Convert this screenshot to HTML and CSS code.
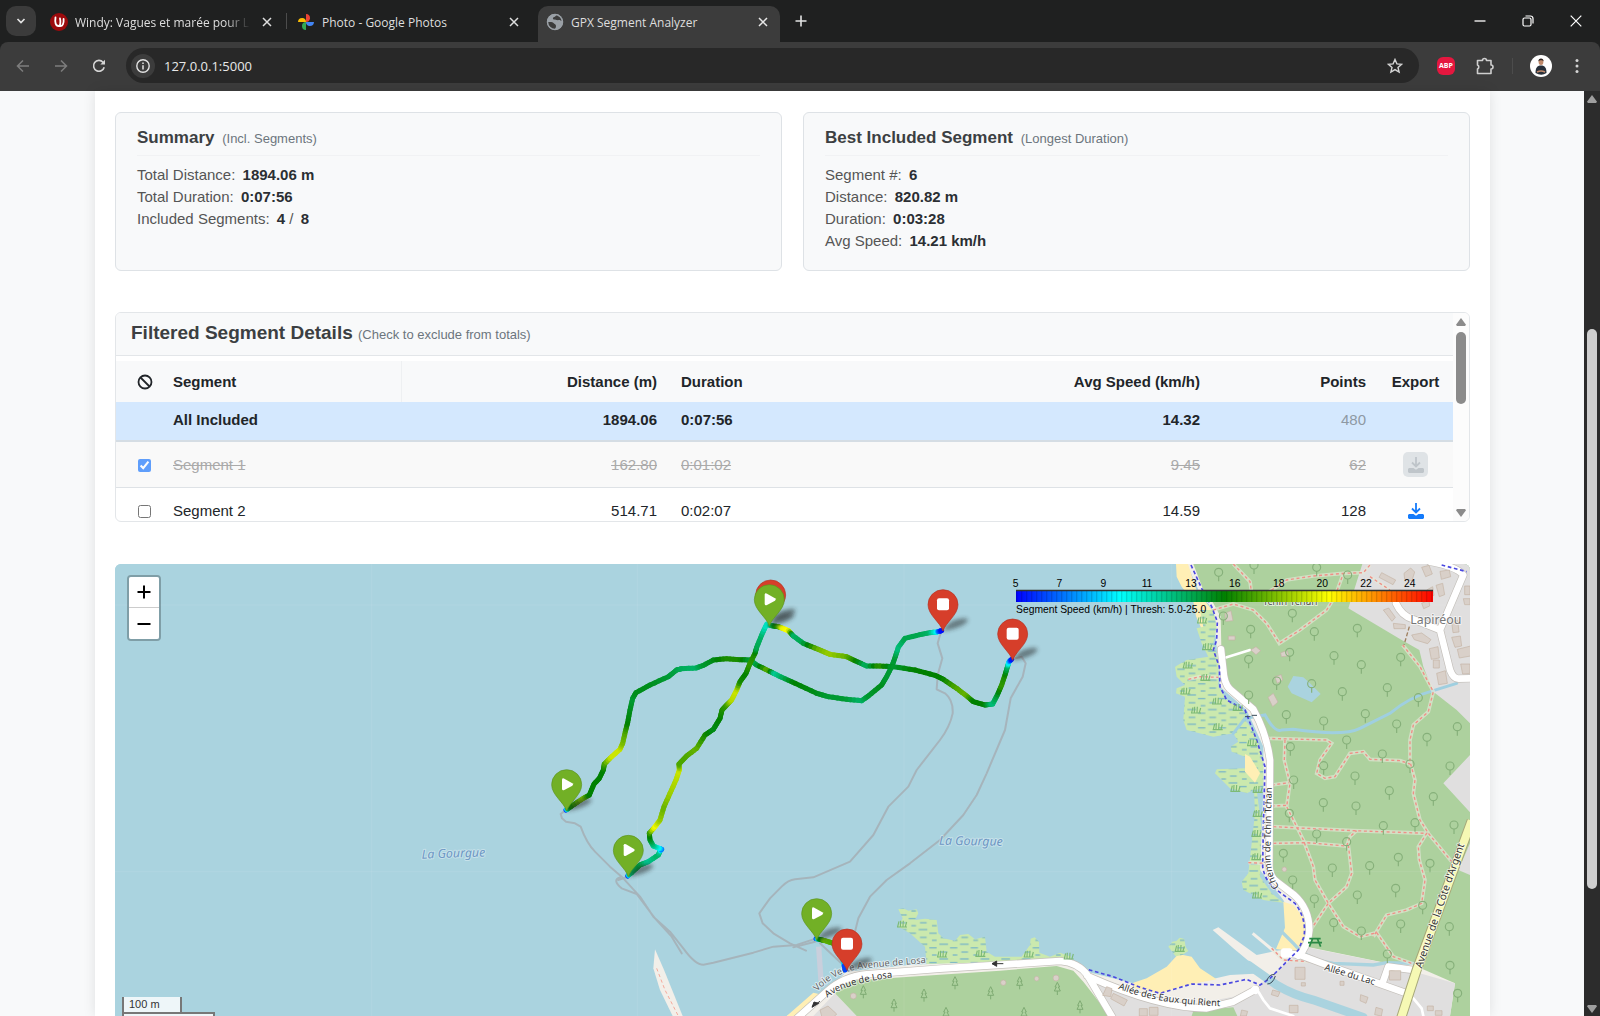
FILE: index.html
```html
<!DOCTYPE html>
<html lang="en">
<head>
<meta charset="utf-8">
<title>GPX Segment Analyzer</title>
<link rel="stylesheet" href="styles.css">
</head>
<body>
<header class="browser">
  <div class="tabstrip">
    <button class="tab-search" aria-label="Search tabs"><svg width="10" height="10" viewBox="0 0 10 10"><path d="M1.5 3 5 6.5 8.500 3" fill="none" stroke="#e3e3e3" stroke-width="1.700"/></svg></button>
    <div class="tab">
      <svg class="fav" viewBox="0 0 18 18"><circle cx="9" cy="9" r="9" fill="#9c0a0c"/><path d="M5.500 4.500c-.8 5 .2 8.500 3 8.500 2 0 2.300-4 1.500-7.500M10 13c2.500.3 4-2.500 3.600-7" fill="none" stroke="#fff" stroke-width="1.800" stroke-linecap="round"/></svg>
      <span class="tab-title fade">Windy: Vagues et marée pour Lè</span>
      <button class="close" aria-label="Close tab"><svg width="10" height="10" viewBox="0 0 10 10"><path d="M1 1 9 9M9 1 1 9" stroke="#dedede" stroke-width="1.500"/></svg></button>
    </div>
    <span class="sep"></span>
    <div class="tab">
      <svg class="fav" viewBox="0 0 18 18"><path d="M9 9V1a4.200 4.200 0 0 1 4 4.300A4 4 0 0 1 9 9z" fill="#ea4335"/><path d="M9 9h8a4.200 4.200 0 0 1-4.300 4A4 4 0 0 1 9 9z" fill="#4285f4"/><path d="M9 9v8a4.200 4.200 0 0 1-4-4.300A4 4 0 0 1 9 9z" fill="#34a853"/><path d="M9 9H1a4.200 4.200 0 0 1 4.300-4A4 4 0 0 1 9 9z" fill="#fbbc04"/></svg>
      <span class="tab-title">Photo - Google Photos</span>
      <button class="close" aria-label="Close tab"><svg width="10" height="10" viewBox="0 0 10 10"><path d="M1 1 9 9M9 1 1 9" stroke="#dedede" stroke-width="1.500"/></svg></button>
    </div>
    <div class="tab active">
      <svg class="fav" viewBox="0 0 18 18"><circle cx="9" cy="9" r="8" fill="#9aa0a6"/><path d="M10 1.500c.5 2.500-2.500 2-3 3.500s1.500 1.500 3.500 2 3-.5 4 .5 2.500 0 2.300-1A8 8 0 0 0 10 1.500zM1.500 9c2 0 5-.5 6 1s2.500 1 2.500 3-1 2-1 3.500A8 8 0 0 1 1.500 9z" fill="#3c3c3c"/><circle cx="9" cy="9" r="7.500" fill="none" stroke="#9aa0a6" stroke-width="1.500"/></svg>
      <span class="tab-title">GPX Segment Analyzer</span>
      <button class="close" aria-label="Close tab"><svg width="10" height="10" viewBox="0 0 10 10"><path d="M1 1 9 9M9 1 1 9" stroke="#e8e8e8" stroke-width="1.500"/></svg></button>
    </div>
    <button class="newtab" aria-label="New tab"><svg width="12" height="12" viewBox="0 0 12 12"><path d="M6 .5v11M.5 6h11" stroke="#e3e3e3" stroke-width="1.600"/></svg></button>
    <div class="window-buttons">
      <button aria-label="Minimize"><svg width="12" height="12" viewBox="0 0 12 12"><path d="M.5 6h11" stroke="#fff" stroke-width="1.300"/></svg></button>
      <button aria-label="Restore"><svg width="12" height="12" viewBox="0 0 12 12"><rect x="1" y="3" width="8" height="8" rx="1.500" fill="none" stroke="#fff" stroke-width="1.200"/><path d="M3.500 1h5A2.500 2.500 0 0 1 11 3.500v5" fill="none" stroke="#fff" stroke-width="1.200"/></svg></button>
      <button aria-label="Close"><svg width="12" height="12" viewBox="0 0 12 12"><path d="M.7.7l10.600 10.600M11.300.7.7 11.300" stroke="#fff" stroke-width="1.200"/></svg></button>
    </div>
  </div>
  <div class="toolbar">
    <button class="nav" aria-label="Back"><svg width="14" height="14" viewBox="0 0 14 14"><path d="M13 7H1.500M7 1.500 1.500 7 7 12.500" fill="none" stroke="#7d7d7d" stroke-width="1.500"/></svg></button>
    <button class="nav" aria-label="Forward"><svg width="14" height="14" viewBox="0 0 14 14"><path d="M1 7h11.500M7 1.500 12.500 7 7 12.500" fill="none" stroke="#7d7d7d" stroke-width="1.500"/></svg></button>
    <button class="nav" aria-label="Reload"><svg width="14" height="14" viewBox="0 0 14 14"><path d="M12.200 8.200A5.400 5.400 0 1 1 11 3.200l1.500 1.600" fill="none" stroke="#d5d5d5" stroke-width="1.600"/><path d="M13 .8v4.700H8.300z" fill="#d5d5d5"/></svg></button>
    <div class="omnibox">
      <button class="site-info" aria-label="Site information"><svg width="14" height="14" viewBox="0 0 14 14"><circle cx="7" cy="7" r="6.200" fill="none" stroke="#e3e3e3" stroke-width="1.400"/><path d="M7 6.200v4.200M7 3.500v1.500" stroke="#e3e3e3" stroke-width="1.500"/></svg></button>
      <input class="url" type="text" value="127.0.0.1:5000" aria-label="Address">
      <button class="star" aria-label="Bookmark"><svg width="16" height="16" viewBox="0 0 16 16"><path d="M8 1.500 9.900 5.900l4.700.4-3.600 3.100 1.100 4.700L8 11.600l-4.100 2.500L5 9.400 1.400 6.300l4.700-.4z" fill="none" stroke="#d5d5d5" stroke-width="1.400"/></svg></button>
    </div>
    <div class="extensions">
      <button class="ext abp"><span>ABP</span></button>
      <button class="ext puzzle" aria-label="Extensions"><svg width="18" height="18" viewBox="0 0 18 18"><path d="M1.500 3.500h5a2 2 0 0 1 4 0h4.500v4.500a2 2 0 0 1 0 4v4.500h-13.500v-4.500a2.200 2.200 0 0 0 0-4z" fill="none" stroke="#cfcfcf" stroke-width="1.600" stroke-linejoin="round"/></svg></button>
      <span class="sep"></span>
      <button class="ext avatar" aria-label="Profile"><svg width="22" height="22" viewBox="0 0 22 22"><circle cx="11" cy="11" r="11" fill="#fff"/><path d="M5.500 18c0-5 1.500-7.500 5.500-7.500s5.500 2.500 5.500 7.500q-5 3.500-11 0z" fill="#27303a"/><ellipse cx="11" cy="7" rx="2.400" ry="3" fill="#c08a6c"/><path d="M8.400 6.500c-.4-4 5.600-4 5.200 0-.8-1.800-4.200-1.800-5.200 0z" fill="#2a201c"/><path d="M7 17q4-2 8 0" stroke="#c08a6c" stroke-width="1.600" fill="none"/></svg></button>
      <button class="ext" aria-label="Menu"><svg width="4" height="16" viewBox="0 0 4 16" fill="#d5d5d5"><circle cx="2" cy="2.500" r="1.500"/><circle cx="2" cy="8" r="1.500"/><circle cx="2" cy="13.500" r="1.500"/></svg></button>
    </div>
  </div>
</header>
<div class="viewport">
  <main class="container">
    <div class="cards">
      <section class="card">
        <h2>Summary <small>(Incl. Segments)</small></h2>
        <p>Total Distance: <b>1894.06 m</b></p>
        <p>Total Duration: <b>0:07:56</b></p>
        <p>Included Segments: <b>4</b> / <b>8</b></p>
      </section>
      <section class="card">
        <h2>Best Included Segment <small>(Longest Duration)</small></h2>
        <p>Segment #: <b>6</b></p>
        <p>Distance: <b>820.82 m</b></p>
        <p>Duration: <b>0:03:28</b></p>
        <p>Avg Speed: <b>14.21 km/h</b></p>
      </section>
    </div>
    <section class="details">
      <div class="scroller">
        <h2 class="details-title">Filtered Segment Details <small>(Check to exclude from totals)</small></h2>
        <table>
          <colgroup><col class="c-check"><col class="c-seg"><col class="c-dist"><col class="c-dur"><col class="c-avg"><col class="c-pts"><col class="c-exp"></colgroup>
          <thead>
            <tr><th class="mid"><svg class="ban" width="16" height="16" viewBox="0 0 16 16" role="img" aria-label="Exclude"><circle cx="8" cy="8" r="6.500" fill="none" stroke="#212529" stroke-width="1.800"/><path d="M3.500 3.500l9 9" stroke="#212529" stroke-width="1.800"/></svg></th><th class="rule">Segment</th><th class="num">Distance (m)</th><th>Duration</th><th class="num">Avg Speed (km/h)</th><th class="num">Points</th><th class="mid">Export</th></tr>
          </thead>
          <tbody>
            <tr class="total"><td></td><td>All Included</td><td class="num">1894.06</td><td>0:07:56</td><td class="num">14.32</td><td class="num muted">480</td><td></td></tr>
            <tr class="excluded"><td class="mid"><input type="checkbox" checked aria-label="Exclude segment 1"></td><td>Segment 1</td><td class="num">162.80</td><td>0:01:02</td><td class="num">9.45</td><td class="num">62</td><td class="mid"><button class="export off" disabled aria-label="Export segment 1"><svg width="16" height="16" viewBox="0 0 16 16"><path d="M8 0v9M4 5.500 8 9.500l4-4" fill="none" stroke="currentColor" stroke-width="1.800"/><path d="M1 11h4.500l2.500 1.800L10.500 11H15l1 1v3l-1 1H1l-1-1v-3z" fill="currentColor"/></svg></button></td></tr>
            <tr><td class="mid"><input type="checkbox" aria-label="Exclude segment 2"></td><td>Segment 2</td><td class="num">514.71</td><td>0:02:07</td><td class="num">14.59</td><td class="num">128</td><td class="mid"><button class="export" aria-label="Export segment 2"><svg width="16" height="16" viewBox="0 0 16 16"><path d="M8 0v9M4 5.500 8 9.500l4-4" fill="none" stroke="currentColor" stroke-width="1.800"/><path d="M1 11h4.500l2.500 1.800L10.500 11H15l1 1v3l-1 1H1l-1-1v-3z" fill="currentColor"/></svg></button></td></tr>
          </tbody>
        </table>
      </div>
      <div class="bar light"><i class="up"></i><i class="thumb"></i><i class="down"></i></div>
    </section>
    <section class="map">
      <svg class="tiles" viewBox="0 0 4065 1380" preserveAspectRatio="xMinYMin slice" role="img" aria-label="Map of the recorded track">
        <defs>
          <pattern id="marsh" width="62" height="44" patternUnits="userSpaceOnUse"><rect width="62" height="44" fill="#cbe9ae"/><path d="M4 9h26M36 20h22M8 32h20M44 41h14" stroke="#5fa5cf" stroke-width="3"/></pattern>
          <linearGradient id="speed"><stop offset="0" stop-color="#00f"/><stop offset=".25" stop-color="#0ff"/><stop offset=".5" stop-color="green"/><stop offset=".75" stop-color="#ff0"/><stop offset="1" stop-color="red"/></linearGradient>
          <pattern id="ticks" width="15" height="36" patternUnits="userSpaceOnUse"><path d="M2 0v36" stroke="#000" stroke-opacity=".14" stroke-width="4"/></pattern>
          <filter id="soft" x="-50%" y="-50%" width="200%" height="200%"><feGaussianBlur stdDeviation="7"/></filter>
          <g id="leaf-tree" fill="none" stroke="#86b07a" stroke-width="3.500"><circle r="12"/><path d="M0 12v15"/></g>
          <g id="pine" fill="none" stroke="#7fab73" stroke-width="3"><path d="M0-18-7-4h4L-9 8h18L3-4h4zM0 8v12"/></g>
          <path id="reeds" d="M-12 8-8-8M-4 8-3-10M4 8 5-10M11 8l4-14M-14 9h30" fill="none" stroke="#7dba75" stroke-width="3.500"/>
          <path id="pin-shape" d="M0 0C-8-26-45-48-45-79a45 45 0 0 1 90 0C45-48 8-26 0 0z"/>
          <g id="pin-shadow"><path d="M0 0C8-20 30-36 66-38c18 2 4 16-14 24C35-6 18-2 0 0z" fill="#222" opacity=".5" filter="url(#soft)"/></g>
          <g id="start"><use href="#pin-shadow"/><use href="#pin-shape" fill="#72b026" stroke="#5c9420" stroke-width="2"/><path d="M-14-94v28q1 6 7 3l24-13q5-4 0-7l-24-14q-6-3-7 3z" fill="#fff"/></g>
          <g id="stop"><use href="#pin-shadow"/><use href="#pin-shape" fill="#d63e2a" stroke="#b53424" stroke-width="2"/><rect x="-18" y="-98" width="36" height="36" rx="6" fill="#fff"/></g>
        </defs>
        <rect width="4065" height="1500" fill="#aad3df"/>
        <g transform="translate(2655 -12)">
          <path d="M560 12 600 100 640 150 650 262 660 380 740 450 790 560 790 690 780 930 850 1020 920 1160 830 1172 770 1185 655 1102 638 1110 700 1165 790 1240 690 1245 560 1275 400 1270 260 1235 180 1195 0 1200-280 1216-460 1235-560 1330-640 1368H1410V12z" fill="#f2efe9"/>
          <path d="M528 12h36l26 80 48 60v48l-32 10-18-42-8-43-35-45-15-30zM850 1025l30 10 32 40 3 65-25 35-62-8 27-64zM400 1268l40-13 60-35 35-38 40 8 25 35 50 33-90 17-80 25-80-16zM-640 1368l80-70 20 5-60 65z" fill="#ffefb5"/>
          <path d="M580 12 610 90 640 130 662 170 664 260 680 370 700 395 765 450 805 545 816 600 812 900 820 955 880 1010 920 1060 925 1110 920 1160 1140 1205 1240 1215 1365 1270 1350 1368H1410V12z" fill="#add19e"/>
          <path d="M1087 12 1045 145 1205 240 1258 270 1270 320 1300 395 1370 450 1410 490V12zM1410 585l-80 85 80 87zM1410 850l-35 80 35 15zM262 1250l98 40 180 50 160-30 70-30 100-78 50-40 220 44 225 64-15 98H335zM-495 1300l65 68h-130z" fill="#e0dfdf"/>
          <path d="M-495 1300l45-38L0 1232l170-14 50 14 30 33 80 103h-760zM580 1352l120-10 12 26H575z" fill="#add19e"/>
          <path d="M600 150h40l10 50-10 50 15 50v80l25 40 60 40-40 60-60 10-80-20-10-30 5-70-27-10 2-15 25-10-25-25-5-30 35-20 65-10-20-40-15-45 20-5zM700 520l35-40 30 40 25 80v80l-20 10 14 110-4 150 35 50 35 28-60-8-60-30-5-25 20-25 20-180-3-70-22 10-50-15-45-45 5-12 85-3v-35l-40-15-3-15 23-15zM505 1160l12-15 12-2 10-10 14 4 4 24 8 12-18 12-20 4zM-305 1048L-290 1045-275 1052-250 1048-245 1060-255 1080-225 1076-190 1080-185 1120-170 1135-135 1142-120 1125-95 1122-75 1138-45 1130-40 1175-15 1190 65 1190 90 1155 92 1136 104 1132 117 1145 118 1178 150 1190 180 1178 214 1190 205 1200-220 1212-225 1160-270 1120-305 1100-292 1075z" fill="url(#marsh)"/>
          <path d="M735 582l15 8 30 50-15 28-30-33z" fill="#ffefb5"/>
          <g fill="none" stroke="#aad3df" stroke-linecap="round">
            <path d="M745 1215 830 1275Q880 1305 940 1320L1090 1372" stroke-width="26"/>
            <path d="M845 1115 880 1150Q920 1200 1000 1210L1120 1215 1160 1208 1240 1210" stroke-width="10"/>
            <path d="M700 520 735 475 795 465Q825 520 845 510L880 508Q1030 530 1080 505L1170 460Q1230 410 1300 392L1370 370" stroke-width="9" stroke="#9fcfe0"/>
          </g>
          <path d="M880 348l30 4 20 18 32 32-27 25-60-27-12-20z" fill="#aad3df"/>
          <path d="M-1035 1168l25 57 58 143h-30l-38-78-20-65z" fill="#f2efe9"/>
          <path d="M-1030 1225 -1005 1290 -965 1368" fill="none" stroke="#f5a99b" stroke-width="3" stroke-dasharray="10 8"/>
          <path d="M-544 1160-537 1262" stroke="#c9cfdc" stroke-width="16"/>
          <path d="M758 1120 830 1180" stroke="#f2efe9" stroke-width="9"/>
          <g fill="none" stroke="#e6e8d8" stroke-opacity=".65" stroke-width="11" id="paths">
            <path id="trail" d="M565 358 600 350 655 352M640 150 700 132 760 150 800 190 838 250 900 210 980 150 1005 110 1030 40 1090 38 1110 15M700 12 750 65 755 100M800 100 860 60 940 48 1030 40M1110 50 1170 90M1208 255 1260 320 1300 395 1285 455 1240 495 1230 540 1230 605 1245 660 1240 700 1260 780 1285 820 1355 905M800 535 980 540 995 550 960 600 950 640 975 655 1005 650 1050 580 1090 575 1110 598 1200 602 1230 612M855 540 853 600 870 670 860 740 910 840 940 920 945 960 985 1030 1030 1100 1080 1130 1130 1118 1180 1190 1240 1212M815 675 868 668M815 738 860 736M820 800 1060 812 1280 820 1255 860 1258 900 1275 960 1265 1030 1220 1050 1160 1065 1120 1130M820 850 920 848 1040 858 1050 830 1070 812M1045 855 1055 940 1040 980 985 1030 935 1105M745 908 800 910M815 1165 850 1200 930 1205"/>
          </g>
          <use href="#trail" class="trail-dash"/>
          <path d="M1228 200 1212 255" stroke="#a08060" stroke-width="4" stroke-dasharray="12 6"/>
          <g fill="none" stroke-linecap="round" stroke-linejoin="round" stroke="#c4c0bb" stroke-width="24" id="roads">
            <g id="road-lines">
              <path d="M663 268 670 330Q672 370 690 388L760 448Q800 520 810 600L808 920Q810 950 830 965L880 1003Q928 1045 928 1110 925 1160 895 1187"/>
              <path d="M-620 1385-520 1295Q-470 1250-400 1243L-180 1226 180 1203Q235 1208 262 1245L345 1385M262 1248Q480 1345 620 1345L700 1325 768 1288"/>
              <path d="M860 1180 900 1185 980 1215 1130 1268 1220 1300M1150 1262 1165 1220 1240 1230"/>
              <path d="M1188 130Q1205 168 1240 178L1320 210 1390 45Q1370 20 1290 5M1320 210 1350 330Q1360 356 1375 356L1410 355"/>
            </g>
          </g>
          <use href="#road-lines" class="road-fill"/>
          <g fill="none" stroke="#fff" stroke-linecap="round"><path d="M680 292 750 270" stroke-width="8"/><path d="M772 1290 790 1320 810 1345 880 1368M1240 1315 1265 1345 1270 1368" stroke-width="8"/></g>
          <rect x="843" y="1165" width="34" height="28" rx="8" fill="#fff"/><circle cx="765" cy="1290" r="13" fill="#fff"/>
          <path d="M1195 1400 1250 1230 1415 782" fill="none" stroke="#a7a879" stroke-width="30"/>
          <path d="M1195 1400 1250 1230 1415 782" fill="none" stroke="#f6f9b4" stroke-width="24"/>
          <path d="M573 15 605 85 635 140 652 185 650 240 640 270 658 320 660 380 680 420 735 450 770 540 795 620 790 800 788 920Q795 965 830 990L885 1030Q920 1075 912 1130L895 1170 810 1255 780 1275 740 1258 660 1275 575 1272 480 1300 420 1282 340 1250 262 1228M1325 15 1400 35" fill="none" stroke="#4a48e0" stroke-width="5" stroke-dasharray="11 8"/>
          <g fill="none" stroke="#3a4a58" stroke-width="3"><path d="M800 1262q10-22 24-18M802 1272q16 0 24-24M735 470h16M755 466h16"/></g>
          <g fill="#d9d0c9" stroke="#c4b3a5" stroke-width="2">
            <path d="M1145 38l42 22-8 14-42-22zM1212 40l20-16 12 12-8 26-22-4zM1265 22l22-6 10 26-20 8zM1320 34l28-4 4 20-28 8zM1308 76l20-6 6 34-16 6zM1280 90l18-10 4 26-14 6zM1150 150l16-6 20 28-10 12zM1265 130l22-10 2 18-18 8zM1235 225l30-6 28 20-10 12-40-12zM1288 266l26-6 4 34-24 4zM1355 232l26-4 4 30-20 4zM1372 268l40-10v30l-34 6zM1382 312h28v28l-22 2zM1310 340l26-8 6 38-26 4zM1355 186l18-6 4 36-18 2zM1394 78h16v26h-16zM1390 116h20v18h-16zM1300 300h18v24h-18zM1180 190l36 4v12h-34z"/>
            <path d="M675 160l18-8 6 30-22 2zM685 228h20v12h-20zM752 270l16-10 14 12-14 12zM842 278l20-6 4 16-22 2zM824 350l20-6 4 16-16 10zM804 412l16-12 14 26-16 14z"/>
            <path d="M885 1222h30v36h-30zM1168 1232h34v28h-34zM904 1268h12v10h-12zM1020 1264h12v12h-12zM818 1290l22 6-6 14-20-6zM868 1336h26v22h-26zM1082 1304l22 8-6 18-18-8zM1128 1342l20 6-4 20-20-4zM1282 1338h18v14h-18zM1306 1352h20v14h-20zM320 1280l16 6-4 24-24-4zM340 1300l42 20-10 18-40-22zM418 1346h24v22h-24zM448 1342h26v24h-26zM725 1350l18 4-4 14h-18z"/>
            <circle cx="10" cy="1268" r="8"/><circle cx="110" cy="1256" r="7"/><circle cx="168" cy="1254" r="9"/><circle cx="-440" cy="1308" r="9"/><path d="M-540 1350l24-12 26 24-10 10h-34z"/><circle cx="853" cy="928" r="7"/>
          </g>
          <path d="M928 1136h34M924 1148h42M938 1136l-10 24M952 1136l10 24" stroke="#2a8a45" stroke-width="5"/>
          <g id="trees"></g>
          <g stroke="#fff" stroke-opacity=".12" stroke-width="2"><path d="M515 12v1356M-288 12v1356M-1088 12v1356M-1885 12v1356M-2655 135H1410M-2655 935H1410"/></g>
        </g>
        <g transform="translate(1275 -12)" class="route">
          <path d="M75 752 62 762 66 775 78 785 105 790 122 800Q140 850 165 875L210 920 245 950 300 1010 340 1070 390 1115 430 1165Q465 1214 490 1214L520 1208 640 1178 700 1160 770 1155 820 1138M240 952Q215 960 245 985L290 1002 345 1075 395 1130 425 1180M265 950 235 960"/>
          <path d="M1203 215 1193 250 1207 295 1193 345 1190 388 1215 400Q1240 420 1238 460 1230 500 1200 540L1130 630 1105 680 1045 740 1000 825 930 905 820 952 765 958Q745 960 725 980L690 1015 658 1060 668 1090 700 1120 750 1150 798 1172M760 1162 825 1145"/>
          <path d="M1415 298 1445 290 1457 310 1448 350 1412 415 1395 510 1340 640 1310 705 1270 765 1200 840 1110 910 1040 960 990 1010 955 1075 945 1115M840 1150 915 1220"/>
        </g>
        <g class="labels">
          <text class="water" transform="translate(920 884) rotate(-2)">La Gourgue</text>
          <text class="water" transform="translate(2472 842) rotate(1)">La Gourgue</text>
          <text class="place" x="3886" y="181">Lapiréou</text>
          <text class="place small" x="3443" y="123">Tchin Tchan</text>
          <g transform="translate(2655 -12)">
            <path id="l1" d="M838 980Q806 940 812 850L817 600" fill="none"/>
            <path id="l2" d="M354 1286Q500 1345 760 1338" fill="none"/>
            <path id="l3" d="M972 1230 1180 1292" fill="none"/>
            <path id="l4" d="M1265 1226 1427 758" fill="none"/>
            <path id="l5" d="M-518 1313Q-450 1262-270 1247" fill="none"/>
            <path id="l6" d="M-548 1295Q-500 1240-420 1226L-180 1205" fill="none"/>
            <text class="street"><textPath href="#l1">Chemin de Tchin Tchan</textPath></text>
            <text class="street"><textPath href="#l2">Allée des Eaux qui Rient</textPath></text>
            <text class="street"><textPath href="#l3">Allée du Lac</textPath></text>
            <text class="street avenue"><textPath href="#l4">Avenue de la Côte d'Argent</textPath></text>
            <text class="street"><textPath href="#l5">Avenue de Losa</textPath></text>
            <text class="street faint"><textPath href="#l6">Voie Verte Avenue de Losa</textPath></text>
            <path d="M10 1211h-34M-10 1203l-14 8 14 8zM-540 1324l-24 16M-544 1330l-20 12 6-16z" stroke="#333" stroke-width="3" fill="#333"/>
          </g>
        </g>
        <g id="tracks" transform="translate(1275 -12)"></g>
        <g transform="translate(1275 -12)">
          <use href="#stop" x="692" y="184"/><use href="#start" x="688" y="198"/><use href="#stop" x="1209" y="213"/><use href="#stop" x="1418" y="301"/>
          <use href="#start" x="80" y="753"/><use href="#start" x="265" y="950"/><use href="#start" x="830" y="1140"/><use href="#stop" x="921" y="1231"/>
        </g>
        <g transform="translate(2703 78)" class="legend">
          <rect width="1251" height="36" fill="url(#speed)"/><rect width="1251" height="36" fill="url(#ticks)"/><path d="M0 1.500h1251" stroke="#333" stroke-width="4"/>
          <g text-anchor="middle"><text x="-1" y="-10">5</text><text x="130" y="-10">7</text><text x="262" y="-10">9</text><text x="393" y="-10">11</text><text x="525" y="-10">13</text><text x="656" y="-10">16</text><text x="788" y="-10">18</text><text x="919" y="-10">20</text><text x="1050" y="-10">22</text><text x="1181" y="-10">24</text></g>
          <text x="0" y="70">Segment Speed (km/h) | Thresh: 5.0-25.0</text>
        </g>
      </svg>
      <div class="zoom"><button aria-label="Zoom in"><svg width="14" height="14" viewBox="0 0 14 14"><path d="M7 .5v13M.5 7h13" stroke="#000" stroke-width="2"/></svg></button><button aria-label="Zoom out"><svg width="14" height="14" viewBox="0 0 14 14"><path d="M.5 7h13" stroke="#000" stroke-width="2"/></svg></button></div>
      <div class="scale"><div class="metric">100 m</div><div class="imperial"></div></div>
    </section>
  </main>
  <div class="bar dark"><i class="up"></i><i class="thumb"></i><i class="down"></i></div>
</div>
<script src="script.js"></script>
</body>
</html>
```
FILE: styles.css
```css
* { box-sizing: border-box; }
body { margin: 0; height: 100vh; display: flex; flex-direction: column; overflow: hidden; font-family: "Liberation Sans", Arial, sans-serif; font-size: 15px; color: #212529; background: #f8f9fa; }
button { border: 0; padding: 0; background: none; display: flex; align-items: center; justify-content: center; font: inherit; }

/* Browser frame */
.browser { background: #1f2020; font-family: "Open Sans", "Noto Sans", sans-serif; font-size: 12px; color: #dedede; }
.tabstrip { height: 42px; display: flex; align-items: center; padding-left: 6px; }
.tab-search { width: 30px; height: 30px; border-radius: 10px; background: #3b3b3b; margin-right: 4px; }
.tab { width: 246px; height: 36px; display: flex; align-items: center; padding: 2px 10px 0 10px; }
.fav { width: 18px; height: 18px; flex: none; margin-right: 7px; }
.tab-title { flex: 1; white-space: nowrap; overflow: hidden; }
.fade { mask-image: linear-gradient(90deg, #000 86%, transparent); }
.close { width: 18px; height: 18px; margin-left: 8px; }
.sep { width: 1px; height: 16px; background: #4c4c4c; }
.active { width: 242px; height: 36px; background: #3c3c3c; border-radius: 10px 10px 0 0; align-self: flex-end; padding: 0 8px 4px; margin-left: 5px; }
.newtab { width: 30px; height: 30px; margin-left: 6px; }
.window-buttons { margin-left: auto; display: flex; }
.window-buttons button { width: 48px; height: 40px; }
.toolbar { height: 49px; display: flex; align-items: center; background: #3c3c3c; border-radius: 8px 8px 0 0; padding: 0 0 2px 8px; }
.nav { width: 30px; height: 30px; margin-right: 8px; }
.omnibox { flex: 1; height: 35px; margin-left: 4px; display: flex; align-items: center; border-radius: 18px; background: #282828; padding: 0 16px 0 5px; }
.site-info { width: 24px; height: 24px; border-radius: 50%; background: #3c3c3c; flex: none; }
.url { flex: 1; border: 0; background: none; color: #e8e8e8; font: inherit; font-size: 13px; margin-left: 7px; }
.extensions { display: flex; align-items: center; width: 181px; padding: 0 21px 0 18px; justify-content: space-between; }
.abp { width: 18px; height: 18px; background: #e5173f; border-radius: 6px; color: #fff; font-weight: 700; font-size: 7px; }
.puzzle { margin-left: 4px; }
.avatar { margin-right: 6px; }

/* Page */
.viewport { flex: 1; min-height: 0; display: flex; }
.container { flex: 1; margin: 0 94px 0 95px; padding: 21px 20px 0; background: #fff; box-shadow: 0 0 12px rgba(0, 0, 0, .1); display: flex; flex-direction: column; }
.cards { display: grid; grid-template-columns: 1fr 1fr; gap: 21px; }
.card { border: 1px solid #dee2e6; border-radius: 6px; background: #f8f9fa; padding: 15px 21px 18px; color: #555; line-height: 22px; }
.card h2 { margin: 0 0 8px; padding-bottom: 7px; border-bottom: 1px solid #f1f2f4; font-size: 17px; line-height: 20px; color: #3c3f42; }
small { font-size: 13px; font-weight: 400; line-height: 1; color: #6c757d; }
.card small { margin-left: 3px; }
.card p { margin: 0; }
.card b { color: #2b2f33; margin-left: 3px; }
.details { height: 210px; margin: 41px 0 42px; display: flex; border: 1px solid #e3e6e9; border-radius: 6px; overflow: hidden; }
.scroller { flex: 1; overflow: hidden; }
.details-title { height: 43px; margin: 0 0 5px; padding: 0 15px; font-size: 19px; line-height: 40px; color: #3c3f42; background: #f8f9fa; border-bottom: 1px solid #e3e6e9; }
table { width: 100%; table-layout: fixed; border-collapse: separate; border-spacing: 0; }
.c-check { width: 45px; }
.c-seg { width: 241px; }
.c-dist { width: 267px; }
.c-pts { width: 166px; }
.c-exp { width: 75px; }
th, td { height: 46px; padding: 0 12px; text-align: left; border-bottom: 1px solid #dee2e6; }
th { height: 41px; background: #f8f9fa; border: 0; }
.rule { border-right: 1px solid #eef0f2; }
.num { text-align: right; }
.mid { text-align: center; }
th.mid, td.mid { padding: 0; }
td.mid:first-child, th.mid:first-child { padding: 0 0 2px 12px; }
.mid button { margin: 0 auto; }
.ban { vertical-align: middle; }
input[type="checkbox"] { width: 13px; height: 13px; margin: 0; vertical-align: middle; accent-color: #0d6efd; }
.total td { height: 40px; padding-bottom: 3px; background: #d4e8fe; font-weight: 700; border-bottom: 2px solid #d5dde4; }
.total .muted { font-weight: 400; color: #8e99a4; }
.excluded td { background: #f9f9f9; color: #aaa; text-decoration: line-through; }
.excluded input { opacity: .65; }
.export { width: 25px; height: 25px; color: #147bfb; border-radius: 5px; }
.off { background: #dfe3e6; color: #bfc5ca; }

/* Scroll bars */
.bar { width: 16px; display: flex; flex-direction: column; align-items: center; background: #fcfcfc; }
.bar i { display: block; }
.up, .down { width: 10px; height: 8px; background: #8b8b8b; }
.up { clip-path: polygon(50% 0, 100% 85%, 90% 100%, 10% 100%, 0 85%); }
.down { clip-path: polygon(50% 100%, 100% 15%, 90% 0, 10% 0, 0 15%); margin-top: auto; margin-bottom: 4px; }
.thumb { width: 10px; height: 72px; border-radius: 5px; background: #8b8b8b; }
.light .up { margin: 5px 0 6px; }
.dark { background: #2c2c2c; }
.dark .up, .dark .down { background: #9f9f9f; }
.dark .up { margin: 4px 0 0; }
.dark .thumb { height: 560px; margin-top: 226px; background: #cfcfcf; }
.dark .down { margin-bottom: 3px; }

/* Map */
.map { flex: 1; min-height: 0; position: relative; overflow: hidden; border-radius: 6px 6px 0 0; background: #aad3df; }
.tiles { display: block; width: 100%; height: auto; min-height: 100%; }
.trail-dash { fill: none; stroke: #f08f86; stroke-width: 4px; stroke-dasharray: 9 8; }
.road-fill { fill: none; stroke: #fff; stroke-width: 20px; stroke-linecap: round; stroke-linejoin: round; }
.route { fill: none; stroke: #a5adb3; stroke-width: 6px; stroke-linejoin: round; stroke-linecap: round; opacity: .8; }
.labels { font-family: "Noto Sans", sans-serif; }
.labels text { paint-order: stroke; stroke: rgba(255, 255, 255, .6); stroke-width: 6px; stroke-linejoin: round; }
.water { font-size: 37px; font-style: italic; fill: #6c96c4; }
.labels .water { stroke: rgba(255, 255, 255, .35); }
.place { font-size: 37px; fill: #777; }
.place.small { font-size: 30px; fill: #555; }
.street { font-size: 28px; fill: #333; }
.avenue { font-size: 31px; }
.faint { fill: #666; }
.legend { font-family: "Liberation Sans", Arial, sans-serif; font-size: 31px; fill: #000; }
.zoom { position: absolute; left: 12px; top: 11px; width: 34px; border: 2px solid rgba(0, 0, 0, .25); border-radius: 4px; background-clip: padding-box; }
.zoom button { width: 30px; height: 31px; background: #fff; border-radius: 2px 2px 0 0; }
.zoom button:first-child { border-bottom: 1px solid #ccc; }
.zoom button:last-child { border-radius: 0 0 2px 2px; }
.scale { position: absolute; left: 7px; bottom: -12px; font-size: 11px; line-height: 13px; color: #333; }
.scale div { border: 2px solid #777; background: rgba(255, 255, 255, .8); }
.scale .metric { width: 60px; height: 17px; padding: 1px 5px; border-top: 0; }
.scale .imperial { width: 93px; height: 16px; border-bottom: 0; margin-top: -2px; }
```
FILE: script.js
```js
const NS = 'http://www.w3.org/2000/svg';

// Speed scale, 5 to 25 km/h: blue, cyan, green, yellow, red.
const STOPS = [[0, 0, 255], [0, 255, 255], [0, 128, 0], [255, 255, 0], [255, 0, 0]];
function speedColor(speed) {
  const t = Math.max(0, Math.min(3.999, (speed - 5) / 5));
  const i = Math.floor(t);
  return 'rgb(' + STOPS[i].map((c, k) => Math.round(c + (STOPS[i + 1][k] - c) * (t - i))).join(',') + ')';
}

// Each point is x, y, speed.
const TRACKS = [
  [[78,750,5],[84,746,13],[95,738,15],[130,715,17.5],[148,705,15],[162,672,15],[178,655,15],[190,630,15],[193,612,16],[215,590,19],[240,568,19],[248,550,17.5],[256,515,16.5],[263,488,15],[270,450,14.5],[278,415,14],[288,398,14.5],[330,375,14.5],[385,350,14],[410,330,13.7],[425,326,13.3],[468,324,13],[490,316,14],[520,300,14.5],[560,296,15.5],[600,299,15.5],[630,300,14],[650,315,13.5],[685,332,17],[705,342,12],[725,352,13],[765,370,15],[830,400,14.5],[865,410,14],[920,418,14],[965,422,13],[985,408,14],[1025,375,14.5],[1040,350,14],[1056,318,14],[1066,290,14],[1075,262,12.5],[1095,235,13.5],[1140,224,13.5],[1170,218,13],[1190,216,10.5],[1197,214,7],[1205,212,5]],
  [[263,948,5],[268,943,12],[275,938,13],[300,915,14],[325,905,12],[355,885,13],[360,873,12],[365,868,7],[355,864,10],[340,858,12],[330,840,14],[328,820,15.5],[345,800,20],[360,780,18],[372,740,17],[390,700,18],[408,660,18.5],[418,630,19],[417,612,16.5],[440,588,16.5],[470,565,17],[495,525,15.5],[520,508,14.5],[540,475,15],[546,450,15.5],[560,435,16],[575,420,18.5],[590,390,19],[600,365,15.5],[618,340,15],[630,310,16],[645,280,15.5],[650,262,13.5],[665,225,13],[680,192,11]],
  [[685,195,11],[700,198,14],[715,200,16],[728,205,19.5],[745,212,20],[760,228,13],[790,250,13.5],[835,268,17],[870,283,18],[920,290,17],[945,302,15.5],[980,318,13],[1020,318,16],[1060,320,14],[1125,330,15],[1185,346,15],[1210,358,15],[1250,385,16.5],[1280,408,17],[1300,425,15],[1335,435,15],[1358,432,12.5],[1372,405,14],[1385,375,16],[1395,345,15.5],[1403,318,13],[1407,305,9],[1415,298,5]],
  [[828,1136,5],[838,1138,14],[855,1142,17],[880,1150,16.5],[905,1180,16],[915,1230,5]]
];

function add(parent, name, attrs) {
  const el = document.createElementNS(NS, name);
  for (const key in attrs) el.setAttribute(key, attrs[key]);
  parent.appendChild(el);
}

const tracks = document.getElementById('tracks');
const STEPS = 4;
for (const track of TRACKS) {
  for (let i = 1; i < track.length; i++) {
    const [x0, y0, s0] = track[i - 1];
    const [x1, y1, s1] = track[i];
    for (let k = 0; k < STEPS; k++) {
      const a = k / STEPS, b = (k + 1) / STEPS;
      add(tracks, 'line', {
        x1: x0 + (x1 - x0) * a, y1: y0 + (y1 - y0) * a,
        x2: x0 + (x1 - x0) * b, y2: y0 + (y1 - y0) * b,
        stroke: speedColor(s0 + (s1 - s0) * (a + b) / 2),
        'stroke-width': 15, 'stroke-linecap': 'round'
      });
    }
  }
}

const SYMBOLS = {
  'leaf-tree': [[656,37],[762,15],[950,22],[1043,45],[877,160],[670,168],[752,208],[943,215],[1072,205],[746,298],[869,277],[1002,287],[1084,314],[1202,292],[830,363],[935,371],[1027,395],[1162,383],[746,405],[1255,413],[859,464],[971,483],[1096,461],[1190,492],[1040,540],[1372,500],[1281,532],[871,560],[1147,582],[971,617],[1350,618],[1065,648],[881,660],[1230,612],[970,728],[1068,738],[1168,692],[1300,710],[1150,797],[1245,788],[1362,795],[950,822],[850,880],[997,924],[1109,917],[1195,892],[1290,910],[878,960],[943,1017],[1072,1005],[1187,985],[1268,1036],[1348,1100],[1202,1092],[1001,1088],[1084,1113],[1162,1182],[1350,1216],[1373,1300],[868,760],[1040,845]],
  'pine': [[-410,1295],[-318,1335],[-228,1305],[-135,1268],[-28,1298],[59,1268],[-162,1360],[172,1285],[240,1340],[72,1360]],
  'reeds': [[605,180],[620,260],[562,315],[615,352],[555,393],[650,423],[587,450],[652,500],[712,442],[755,548],[705,685],[772,688],[772,760],[768,820],[768,890],[770,1005],[538,1165],[-295,1092],[-175,1182],[-60,1180],[85,1182],[205,1188]]
};
const trees = document.getElementById('trees');
for (const name in SYMBOLS) {
  for (const [x, y] of SYMBOLS[name]) add(trees, 'use', { href: '#' + name, x, y });
}
```
